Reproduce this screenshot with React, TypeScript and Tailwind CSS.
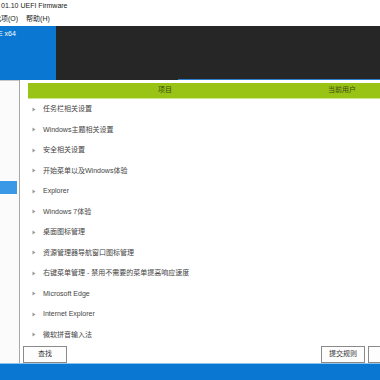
const rows = [
  "任务栏相关设置",
  "Windows主题相关设置",
  "安全相关设置",
  "开始菜单以及Windows体验",
  "Explorer",
  "Windows 7体验",
  "桌面图标管理",
  "资源管理器导航窗口图标管理",
  "右键菜单管理 - 禁用不需要的菜单提高响应速度",
  "Microsoft Edge",
  "Internet Explorer",
  "微软拼音输入法",
];

const Arrow = () => (
  <svg width="4" height="5" viewBox="0 0 4 5" className="shrink-0">
    <path d="M0.5 0.5 L3.5 2.5 L0.5 4.5 Z" fill="#9a9a9a" />
  </svg>
);

const Btn = ({ label, className = "" }: { label: string; className?: string }) => (
  <div
    className={`h-[17px] w-[44px] shrink-0 border border-[#8a8a8a] bg-[#fdfdfd] flex items-center justify-center text-[7px] text-[#333] ${className}`}
  >
    {label}
  </div>
);

export default function App() {
  return (
    <div className="w-[380px] h-[380px] overflow-hidden bg-white flex flex-col font-['Liberation_Sans','Noto_Sans_CJK_SC',sans-serif] text-[7px] text-[#222]">
      {/* title */}
      <div className="h-[13px] flex items-center pl-px shrink-0">01.10 UEFI Firmware</div>
      {/* menu */}
      <div className="h-[13px] flex items-center gap-[8px] ml-[-6px] shrink-0">
        <span>选项(O)</span>
        <span>帮助(H)</span>
      </div>
      {/* banner */}
      <div className="h-[54px] flex shrink-0">
        <div className="w-[58px] bg-[#0a78d2] text-white pt-[3px] pl-0 ml-[-2px]">E x64</div>
        <div className="flex-1 bg-[#262626] flex flex-col justify-end">
          <div className="h-px ml-[122px] bg-[#2a7fcf]" />
        </div>
      </div>
      {/* body */}
      <div className="flex-1 flex min-h-0">
        <div className="w-[19px] shrink-0 bg-[#fbfbfb] border-t border-[#c8c8c8] pt-[100px]">
          <div className="h-[13px] w-[17px] bg-[#3b98e6]" />
        </div>
        <div className="flex-1 border-l border-[#a8a8a8] flex flex-col pt-[3px]">
          <div className="ml-[8px] h-[15px] bg-[#99c416] flex items-center text-[#3c4a12] shrink-0">
            <span className="ml-[130px]">项目</span>
            <span className="ml-[156px]">当前用户</span>
          </div>
          <div className="ml-[8px] h-px bg-[#cfe58a] shrink-0" />
          <div className="flex flex-col">
            {rows.map((r) => (
              <div key={r} className="h-[20.5px] flex items-center pl-[12px] gap-[7px] text-[#444]">
                <Arrow />
                <span className="whitespace-nowrap">{r}</span>
              </div>
            ))}
          </div>
          <div className="flex items-start pl-[3px] pt-px">
            <Btn label="查找" />
            <div className="flex-1" />
            <Btn label="提交规则" />
            <Btn label="导出" className="ml-[3px] mr-[-32px]" />
          </div>
        </div>
      </div>
      {/* bottom bar */}
      <div className="h-px bg-[#8cc2ec] shrink-0" />
      <div className="h-[16px] bg-[#0a78d2] shrink-0" />
    </div>
  );
}
